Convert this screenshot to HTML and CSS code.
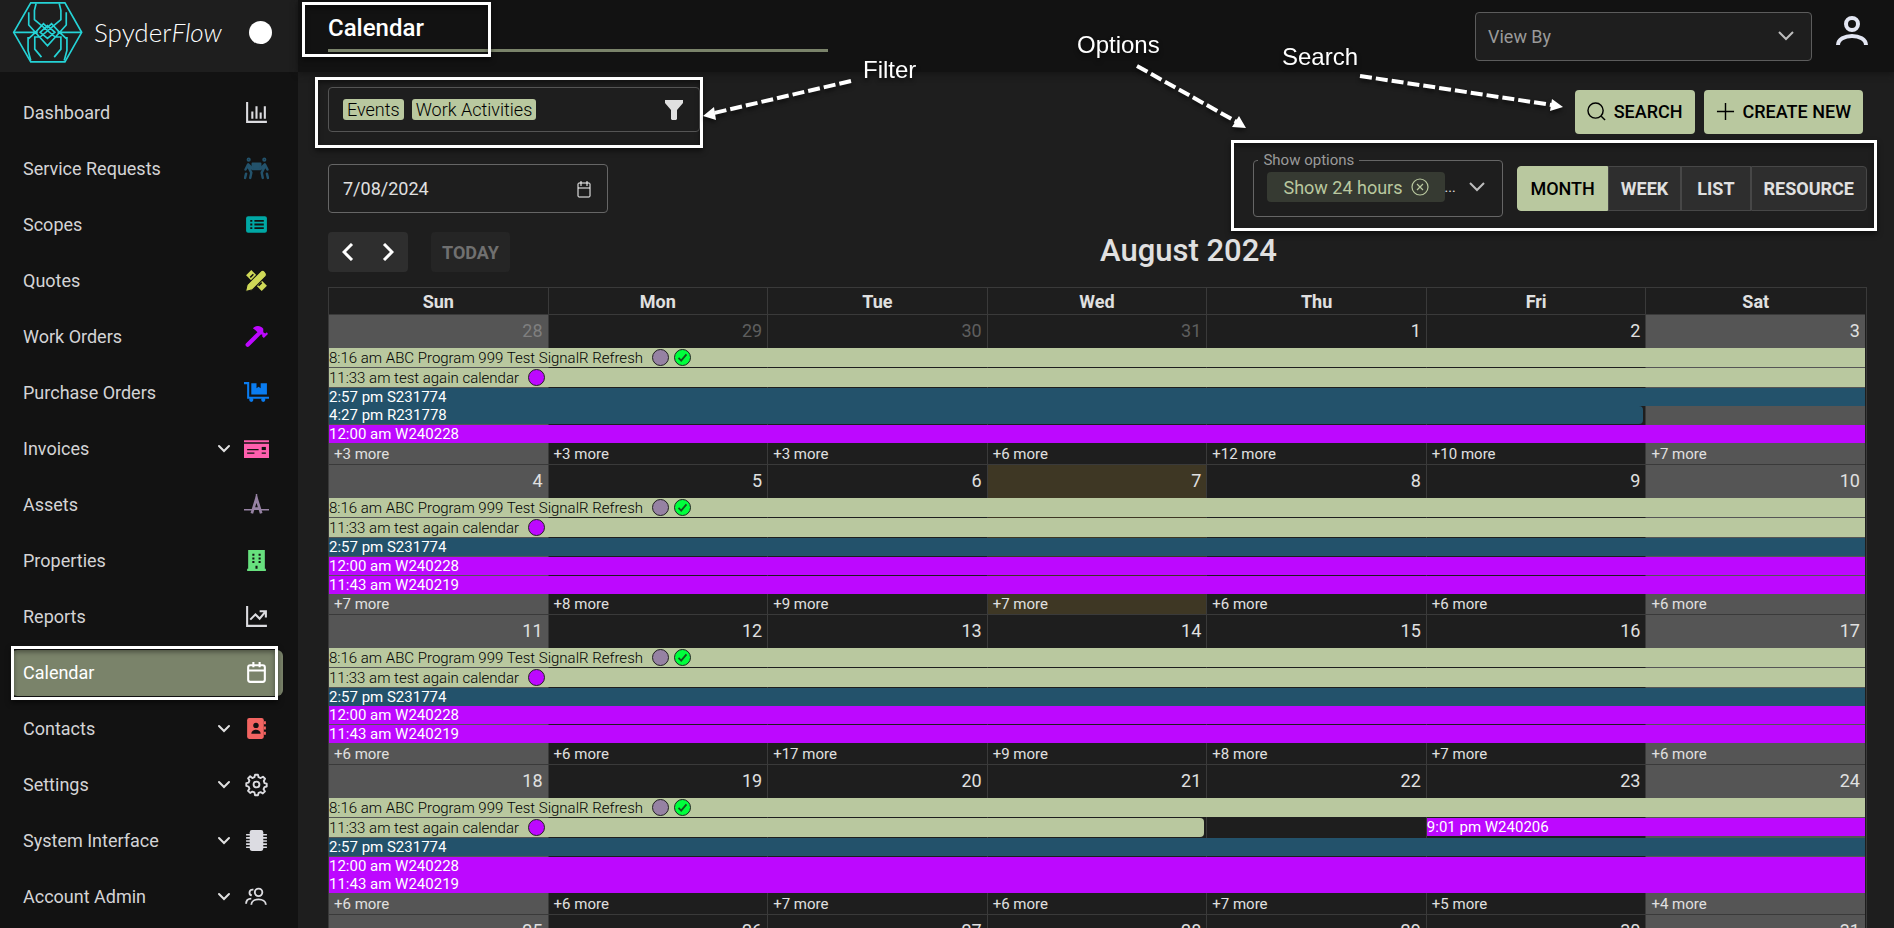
FILE: index.html
```html
<!DOCTYPE html>
<html lang="en">
<head>
  <meta charset="UTF-8">
  <title>SpyderFlow - Calendar</title>
  <link rel="stylesheet" href="styles.css">
</head>
<body>
  <aside class="sidebar">
    <div class="brand">
      <svg class="logo" viewBox="36 0 212 190">
        <path d="M41 96 92 8h102l50 88-50 88H92z"/>
        <path d="M41 96h72M172 96h72M108 10l-5 20v28l62 52h17v36l-20 24M177 10l5 20v28l-62 52h-16v36l20 24M86 36v38l56 62 56-62V36M84 110v40l8 30M200 110v40l-8 30M84 116l22-20 24-26 12 12 12-12 24 26 22 20M120 96l22-20 22 20-22 18z"/>
      </svg>
      <span class="brand-name">Spyder<i>Flow</i></span>
      <span class="brand-dot"></span>
    </div>
    <nav class="menu">
      <a href="#">Dashboard
        <svg class="icon" viewBox="0 0 24 24" fill="none" stroke="#dcdce0" stroke-width="2"><path d="M3 2v19h19M8 18v-7M12 18V6M16 18v-6M20 18V6"/></svg>
      </a>
      <a href="#">Service Requests
        <svg class="icon" viewBox="0 0 24 24" fill="none" stroke="#23526b" stroke-width="2.4" stroke-linecap="round" stroke-linejoin="round"><path d="M8 7h8v6H8z" fill="#23526b" stroke-width="1.5"/><path d="M8 12 4 8 1.500 13M4 10l3 6-1 5M2 17l-1 4M16 12l4-4 2.500 5M20 10l-3 6 1 5M22 17l1 4"/><circle cx="4.500" cy="3.500" r=".8"/><circle cx="19.500" cy="3.500" r=".8"/></svg>
      </a>
      <a href="#">Scopes
        <svg class="icon" viewBox="0 0 24 24"><rect x="2" y="4" width="20" height="16" rx="2" fill="#00a8a5"/><path d="M6 8.500h2M10 8.500h9M6 12h2M10 12h9M6 15.500h2M10 15.500h9" stroke="#121212" stroke-width="1.800"/></svg>
      </a>
      <a href="#">Quotes
        <svg class="icon" viewBox="0 0 24 24"><path d="m2 7 5-5 15 15-5 5z" fill="#cfd957"/><path d="m6 9 3-3M14 17l3-3" stroke="#121212" stroke-width="1.500"/><path d="M1.500 22.500 3 16 16 3c2-3 7 2 5 5L8 21z" fill="#cfd957" stroke="#121212"/></svg>
      </a>
      <a href="#">Work Orders
        <svg class="icon" viewBox="0 0 24 24"><path d="M3.500 20 14 9.500" stroke="#bd08ff" stroke-width="4" stroke-linecap="round"/><path d="M8.500 4C12 1 16 1.500 18.500 4.500V8l2 1 1.500-1 1 1.500-4 4-1.500-1.500V10h-2.500L11 6z" fill="#bd08ff"/></svg>
      </a>
      <a href="#">Purchase Orders
        <svg class="icon" viewBox="0 0 24 24"><path d="M0 3h4v14h20" fill="none" stroke="#0a7cf0" stroke-width="2"/><path d="M7 3h5v5l2-1.500L16 8V3h6v11H7z" fill="#0a7cf0"/><circle cx="7" cy="19" r="2" fill="#0a7cf0"/><circle cx="18.500" cy="19" r="2" fill="#0a7cf0"/></svg>
      </a>
      <a href="#">Invoices
        <svg class="caret" viewBox="0 0 14 14"><path d="m2 5 5 5 5-5"/></svg>
        <svg class="icon" viewBox="0 0 24 24"><path d="M0 4h24v2H0zM0 7.500h24V21H0z" fill="#ff5fae"/><path d="M3 13h11M3 16.500h7M17 16.500h4" stroke="#121212" stroke-width="1.200"/><path d="M17 10.500h4v3h-4z" fill="#121212"/></svg>
      </a>
      <a href="#">Assets
        <svg class="icon" viewBox="0 0 24 24" fill="none" stroke="#9682a3"><path d="M7.500 20.500 12 6l4.500 14.500M9 16h6" stroke-width="2.600"/><path d="M12 2v6M0 17h8M16 17h8" stroke-width="1.400"/></svg>
      </a>
      <a href="#">Properties
        <svg class="icon" viewBox="0 0 24 24"><path d="M4 2h16v18h1v2H3v-2h1z" fill="#67e07e"/><path d="M8 5.500h2v2H8zM14 5.500h2v2h-2zM8 9h2v2H8zM14 9h2v2h-2zM8 12.500h2v2H8zM14 12.500h2v2h-2zM11 17h2v3h-2z" fill="#121212"/></svg>
      </a>
      <a href="#">Reports
        <svg class="icon" viewBox="0 0 24 24" fill="none" stroke="#dcdce0" stroke-width="2"><path d="M3 2v19h19M6 15l5-5 4 4 5-6M15 7h6v6"/></svg>
      </a>
      <a href="#" class="active">Calendar
        <svg class="icon" viewBox="0 0 24 24" fill="none" stroke="#fff" stroke-width="2"><rect x="4" y="5" width="16" height="16" rx="2"/><path d="M4 10h16M9 2v5M15 2v5"/></svg>
        <span class="mark mark-nav"></span>
      </a>
      <a href="#">Contacts
        <svg class="caret" viewBox="0 0 14 14"><path d="m2 5 5 5 5-5"/></svg>
        <svg class="icon" viewBox="0 0 24 24"><rect x="3" y="2" width="16" height="20" rx="2" fill="#f26461"/><path d="M20 5v3M20 10v3M20 15v3" stroke="#f26461" stroke-width="2"/><circle cx="11.500" cy="9" r="2.600" fill="#121212"/><path d="M7 17c0-5 9-5 9 0z" fill="#121212"/></svg>
      </a>
      <a href="#">Settings
        <svg class="caret" viewBox="0 0 14 14"><path d="m2 5 5 5 5-5"/></svg>
        <svg class="icon" viewBox="0 0 24 24" fill="none" stroke="#dcdce0" stroke-width="1.800" stroke-linejoin="round"><circle cx="12" cy="12" r="2.800"/><path d="m10 5 .6-2.400h2.800L14 5l2 .8 2.200-1.300 2 2L19 8.700l.7 2 2.100.5v2.700l-2.200.6-.8 2 1.300 2.100-2 2-2.100-1.300-2 .8-.6 2.200h-2.800L10 19.600l-2-.8-2.100 1.300-2-2L5.200 16l-.8-2-2.200-.6v-2.700l2.200-.5.8-2-1.300-2.100 2-2L8 5.800z"/></svg>
      </a>
      <a href="#">System Interface
        <svg class="caret" viewBox="0 0 14 14"><path d="m2 5 5 5 5-5"/></svg>
        <svg class="icon" viewBox="0 0 24 24"><rect x="5.500" y="2" width="13" height="20" rx="2" fill="#dcdce2"/><path d="M2 6.500h20M2 9.500h20M2 12.500h20M2 15.500h20M2 18.500h20" stroke="#dcdce2" stroke-width="1.500"/></svg>
      </a>
      <a href="#">Account Admin
        <svg class="caret" viewBox="0 0 14 14"><path d="m2 5 5 5 5-5"/></svg>
        <svg class="icon" viewBox="0 0 24 24" fill="none" stroke="#dcdce0" stroke-width="1.800"><circle cx="14" cy="8" r="3.600"/><path d="M7 20c0-7 14-7 14 0M9 5.500c-4-1-5 4.500-1.500 5.500M2 19c0-3 1.500-5 5-5"/></svg>
      </a>
    </nav>
  </aside>

  <main class="page">
    <header class="topbar">
      <div class="page-title">
        <h1>Calendar</h1>
        <span class="mark mark-title"></span>
      </div>
      <div class="select-box">
        <select aria-label="View By"><option>View By</option></select>
        <svg class="chevron" viewBox="0 0 18 18"><path d="m2 5 7 7 7-7"/></svg>
      </div>
      <button class="user" aria-label="Account">
        <svg viewBox="0 0 32 32"><circle cx="16" cy="8" r="6"/><path d="M2 29c0-12 28-12 28 0"/></svg>
      </button>
    </header>

    <div class="content">
      <div class="row">
        <div class="filter">
          <span class="tag">Events</span>
          <span class="tag">Work Activities</span>
          <button aria-label="Filter"><svg viewBox="0 0 18 20"><path d="M0 0h18v3l-6 7v9l-1 1H7l-1-1v-9L0 3z" fill="#e0e0e0"/></svg></button>
          <span class="mark mark-filter"></span>
        </div>
        <div class="actions">
          <button class="btn">
            <svg viewBox="0 0 20 20"><circle cx="9" cy="9" r="8"/><path d="m15 15 4 4"/></svg>SEARCH
          </button>
          <button class="btn">
            <svg viewBox="0 0 20 20"><path d="M10 1v18M1 10h18"/></svg>CREATE NEW
          </button>
        </div>
      </div>

      <div class="row row-date">
        <div class="date-box">
          <input type="text" aria-label="Date" value="7/08/2024">
          <svg viewBox="0 0 18 18"><rect x="3" y="3" width="12" height="14" rx="1"/><path d="M3 8h12M6 1v5M12 1v5"/></svg>
        </div>
        <div class="options">
          <fieldset class="show-options">
            <legend>Show options</legend>
            <span class="chip">Show 24 hours
              <button aria-label="Remove"><svg viewBox="0 0 18 18"><circle cx="9" cy="9" r="8"/><path d="m6 6 6 6M12 6l-6 6"/></svg></button>
            </span>
            <span class="more-chips">...</span>
            <svg class="chevron" viewBox="0 0 18 18"><path d="m2 5 7 7 7-7"/></svg>
          </fieldset>
          <div class="views">
            <button class="selected">MONTH</button>
            <button>WEEK</button>
            <button>LIST</button>
            <button>RESOURCE</button>
          </div>
          <span class="mark mark-options"></span>
        </div>
      </div>

      <div class="cal-head">
        <div class="cal-nav">
          <div class="prev-next">
            <button aria-label="Previous"><svg viewBox="0 0 12 18"><path d="m10 1-8 8 8 8"/></svg></button>
            <button aria-label="Next"><svg viewBox="0 0 12 18"><path d="m2 1 8 8-8 8"/></svg></button>
          </div>
          <button class="today-btn" disabled>TODAY</button>
        </div>
        <h2>August 2024</h2>
        <span></span>
      </div>

      <table class="calendar">
        <thead>
          <tr><th>Sun</th><th>Mon</th><th>Tue</th><th>Wed</th><th>Thu</th><th>Fri</th><th>Sat</th></tr>
        </thead>
        <tbody>
          <tr>
            <td class="weekend other"><span class="num">28</span>
              <div class="event program">8:16 am ABC Program 999 Test SignalR Refresh <i class="dot grey"></i><i class="dot ok"><svg viewBox="0 0 17 17"><path d="m4 9 3 3 6-7"/></svg></i></div>
              <div class="event program">11:33 am test again calendar <i class="dot violet"></i></div>
              <div class="event service joined">2:57 pm S231774</div>
              <div class="event service to-fri">4:27 pm R231778</div>
              <div class="event work">12:00 am W240228</div>
              <a class="more" href="#">+3 more</a></td>
            <td class="other"><span class="num">29</span><a class="more" href="#">+3 more</a></td>
            <td class="other"><span class="num">30</span><a class="more" href="#">+3 more</a></td>
            <td class="other"><span class="num">31</span><a class="more" href="#">+6 more</a></td>
            <td><span class="num">1</span><a class="more" href="#">+12 more</a></td>
            <td><span class="num">2</span><a class="more" href="#">+10 more</a></td>
            <td class="weekend"><span class="num">3</span><a class="more" href="#">+7 more</a></td>
          </tr>
          <tr>
            <td class="weekend"><span class="num">4</span>
              <div class="event program">8:16 am ABC Program 999 Test SignalR Refresh <i class="dot grey"></i><i class="dot ok"><svg viewBox="0 0 17 17"><path d="m4 9 3 3 6-7"/></svg></i></div>
              <div class="event program">11:33 am test again calendar <i class="dot violet"></i></div>
              <div class="event service">2:57 pm S231774</div>
              <div class="event work">12:00 am W240228</div>
              <div class="event work">11:43 am W240219</div>
              <a class="more" href="#">+7 more</a></td>
            <td><span class="num">5</span><a class="more" href="#">+8 more</a></td>
            <td><span class="num">6</span><a class="more" href="#">+9 more</a></td>
            <td class="today"><span class="num">7</span><a class="more" href="#">+7 more</a></td>
            <td><span class="num">8</span><a class="more" href="#">+6 more</a></td>
            <td><span class="num">9</span><a class="more" href="#">+6 more</a></td>
            <td class="weekend"><span class="num">10</span><a class="more" href="#">+6 more</a></td>
          </tr>
          <tr>
            <td class="weekend"><span class="num">11</span>
              <div class="event program">8:16 am ABC Program 999 Test SignalR Refresh <i class="dot grey"></i><i class="dot ok"><svg viewBox="0 0 17 17"><path d="m4 9 3 3 6-7"/></svg></i></div>
              <div class="event program">11:33 am test again calendar <i class="dot violet"></i></div>
              <div class="event service joined">2:57 pm S231774</div>
              <div class="event work">12:00 am W240228</div>
              <div class="event work">11:43 am W240219</div>
              <a class="more" href="#">+6 more</a></td>
            <td><span class="num">12</span><a class="more" href="#">+6 more</a></td>
            <td><span class="num">13</span><a class="more" href="#">+17 more</a></td>
            <td><span class="num">14</span><a class="more" href="#">+9 more</a></td>
            <td><span class="num">15</span><a class="more" href="#">+8 more</a></td>
            <td><span class="num">16</span><a class="more" href="#">+7 more</a></td>
            <td class="weekend"><span class="num">17</span><a class="more" href="#">+6 more</a></td>
          </tr>
          <tr>
            <td class="weekend"><span class="num">18</span>
              <div class="event program">8:16 am ABC Program 999 Test SignalR Refresh <i class="dot grey"></i><i class="dot ok"><svg viewBox="0 0 17 17"><path d="m4 9 3 3 6-7"/></svg></i></div>
              <div class="event program to-wed">11:33 am test again calendar <i class="dot violet"></i></div>
              <div class="event service">2:57 pm S231774</div>
              <div class="event work joined">12:00 am W240228</div>
              <div class="event work">11:43 am W240219</div>
              <a class="more" href="#">+6 more</a></td>
            <td><span class="num">19</span><a class="more" href="#">+6 more</a></td>
            <td><span class="num">20</span><a class="more" href="#">+7 more</a></td>
            <td><span class="num">21</span><a class="more" href="#">+6 more</a></td>
            <td><span class="num">22</span><a class="more" href="#">+7 more</a></td>
            <td><span class="num">23</span>
              <div class="event work two-days second-slot">9:01 pm W240206</div>
              <a class="more" href="#">+5 more</a></td>
            <td class="weekend"><span class="num">24</span><a class="more" href="#">+4 more</a></td>
          </tr>
          <tr>
            <td class="weekend"><span class="num">25</span></td>
            <td><span class="num">26</span></td>
            <td><span class="num">27</span></td>
            <td><span class="num">28</span></td>
            <td><span class="num">29</span></td>
            <td><span class="num">30</span></td>
            <td class="weekend"><span class="num">31</span></td>
          </tr>
        </tbody>
      </table>
    </div>
  </main>

  <!-- help notes drawn over the page -->
  <div class="notes">
    <svg width="1894" height="240" viewBox="0 0 1894 240">
      <g fill="none" stroke="#fff" stroke-width="4" stroke-dasharray="12 4">
        <path d="M851 81 714 113"/>
        <path d="M1137 66 1237 122"/>
        <path d="M1360 76 1552 105"/>
      </g>
      <path d="m703 116 11-9 2 13zM1246 128l-14-1 7-11zM1563 107l-13 4 2-12z" fill="#fff"/>
    </svg>
    <span class="note note-filter">Filter</span>
    <span class="note note-options">Options</span>
    <span class="note note-search">Search</span>
  </div>
</body>
</html>
```
FILE: styles.css
```css
* {
  box-sizing: border-box;
}
body {
  display: flex;
  height: 100vh;
  margin: 0;
  overflow: hidden;
  position: relative;
  background: #1e1e1e;
  color: #e0e0e0;
  font-family: Roboto, Arial, sans-serif;
  font-size: 18px;
}
button, input, select {
  font: inherit;
  color: inherit;
  background: none;
  border: 0;
  padding: 0;
}
a {
  color: inherit;
  text-decoration: none;
}
svg {
  display: block;
}

/* Sidebar */
.sidebar {
  flex: none;
  width: 298px;
  background: #121212;
}
.brand {
  display: flex;
  align-items: center;
  height: 72px;
  padding: 0 26px 8px 12px;
  background: #1e1e1e;
}
.logo {
  width: 71px;
  height: 64px;
  fill: none;
  stroke: #25d3d6;
  stroke-width: 5;
}
.brand-name {
  flex: 1;
  padding-left: 11px;
  color: #fff;
  font-family: Lato, sans-serif;
  font-size: 26px;
  font-weight: 300;
}
.brand-dot {
  width: 23px;
  height: 23px;
  border-radius: 50%;
  background: #fff;
}
.menu {
  display: flex;
  flex-direction: column;
  gap: 10px;
  padding: 18px 15px 0 11px;
}
.menu a {
  display: flex;
  align-items: center;
  position: relative;
  height: 46px;
  padding: 0 14px 2px 12px;
  border-radius: 6px;
  color: #d4d4d6;
}
.menu .active {
  background: #7a836a;
  color: #fff;
}
.icon {
  width: 25px;
  height: 25px;
  margin-left: auto;
}
.caret {
  width: 14px;
  height: 14px;
  margin-left: auto;
  fill: none;
  stroke: #e0e0e0;
  stroke-width: 2;
  stroke-linecap: round;
}
.caret + .icon {
  margin-left: 13px;
}

/* Top bar */
.page {
  flex: 1;
  min-width: 0;
}
.topbar {
  display: flex;
  align-items: center;
  height: 72px;
  padding: 0 26px 0 30px;
  background: #121212;
  box-shadow: 0 2px 6px #151515;
}
.page-title {
  position: relative;
  width: 500px;
  height: 52px;
  margin: 0 auto 20px 0;
  border-bottom: 3px solid #7a836a;
}
.page-title h1 {
  margin: 0;
  padding-top: 14px;
  color: #fff;
  font-size: 24px;
  font-weight: 500;
  line-height: 28px;
}
.select-box {
  display: grid;
  align-items: center;
  width: 337px;
  height: 49px;
  border: 1px solid #5c5c5c;
  border-radius: 4px;
  background: #1e1e1e;
}
.select-box select {
  grid-area: 1 / 1;
  height: 47px;
  padding-left: 12px;
  appearance: none;
  color: #9a9a9a;
}
.chevron {
  width: 18px;
  height: 18px;
  fill: none;
  stroke: #bdbdbd;
  stroke-width: 2;
}
.select-box .chevron {
  grid-area: 1 / 1;
  justify-self: end;
  margin-right: 16px;
  pointer-events: none;
}
.user {
  margin: 0 0 8px 24px;
}
.user svg {
  width: 32px;
  height: 32px;
  fill: none;
  stroke: #e3e6f3;
  stroke-width: 4;
}

/* Filter and options rows */
.content {
  padding: 15px 27px 0 30px;
}
.row {
  display: flex;
  align-items: flex-start;
  justify-content: space-between;
}
.row-date {
  align-items: center;
  margin: 26px 0 15px;
}
.filter {
  display: flex;
  align-items: center;
  gap: 8px;
  position: relative;
  width: 372px;
  height: 45px;
  padding: 0 16px 0 14px;
  border: 1px solid #555;
  border-radius: 4px;
}
.tag {
  padding: 0 4px;
  border-radius: 3px;
  background: #b9c89f;
  color: #000;
  font-weight: 300;
  line-height: 21px;
}
.filter button {
  margin-left: auto;
}
.filter svg {
  width: 18px;
  height: 20px;
}
.actions {
  display: flex;
  gap: 9px;
  padding: 3px 4px 0 0;
}
.btn {
  display: flex;
  align-items: center;
  gap: 8px;
  height: 44px;
  padding: 0 12px 1px;
  border-radius: 4px;
  background: #b9c89f;
  color: #000;
  font-weight: 500;
}
.btn svg {
  width: 19px;
  height: 19px;
  fill: none;
  stroke: #000;
  stroke-width: 1.500;
}
.date-box {
  display: flex;
  align-items: center;
  width: 280px;
  height: 49px;
  padding: 0 14px;
  border: 1px solid #666;
  border-radius: 4px;
}
.date-box input {
  flex: 1;
  min-width: 0;
}
.date-box svg {
  width: 18px;
  height: 18px;
  fill: none;
  stroke: #fff;
}
.options {
  display: flex;
  align-items: center;
  gap: 14px;
  position: relative;
}
.show-options {
  display: flex;
  align-items: center;
  position: relative;
  width: 250px;
  height: 65px;
  margin: -8px 0 0;
  padding: 0 16px 10px 13px;
  border: 1px solid #666;
  border-radius: 4px;
}
.show-options legend {
  margin-left: -9px;
  padding: 0 5px;
  color: #9a9a9a;
  font-size: 15px;
  line-height: 16px;
}
.chip {
  display: flex;
  align-items: center;
  gap: 8px;
  height: 30px;
  padding: 0 16px;
  border-radius: 4px;
  background: #363a32;
  color: #b9c89f;
  white-space: nowrap;
}
.chip svg {
  width: 18px;
  height: 18px;
  fill: none;
  stroke: #b9c89f;
  stroke-width: 1.200;
}
.more-chips {
  font-size: 14px;
}
.show-options .chevron {
  margin-left: auto;
}
.views {
  display: flex;
}
.views button {
  height: 45px;
  padding: 0 12px;
  border: 1px solid #474747;
  background: #2e2e2e;
  font-weight: 700;
}
.views button:nth-child(3) {
  padding: 0 15px;
}
.views .selected {
  border-color: #b9c89f;
  border-radius: 4px 0 0 4px;
  background: #b9c89f;
  color: #000;
  font-weight: 500;
}
.views button:last-child {
  border-radius: 0 4px 4px 0;
}

/* Calendar header */
.cal-head {
  display: flex;
  align-items: center;
  justify-content: space-between;
  height: 40px;
  margin-bottom: 15px;
}
.cal-head h2 {
  margin: 0;
  font-size: 31px;
  font-weight: 500;
  line-height: 36px;
  padding-bottom: 2px;
}
.cal-nav {
  display: flex;
  gap: 23px;
}
.prev-next {
  display: flex;
  border-radius: 4px;
  background: #2e2e2e;
}
.prev-next button {
  width: 40px;
  height: 40px;
  padding: 0 14px;
}
.prev-next svg {
  width: 12px;
  height: 18px;
  fill: none;
  stroke: #fff;
  stroke-width: 3;
}
.today-btn {
  height: 40px;
  padding: 0 11px;
  border-radius: 4px;
  background: #252525;
  color: #707070;
  font-weight: 700;
}

/* Month grid */
.calendar, .calendar thead, .calendar tbody {
  display: block;
}
.calendar {
  padding-right: 1px;
  border: solid #3a3a3a;
  border-width: 1px 1px 0 0;
}
.calendar tr {
  display: grid;
  grid-template-columns: repeat(7, 1fr);
}
.calendar th {
  height: 26px;
  padding: 0;
  border-left: 1px solid #3a3a3a;
  line-height: 27px;
}
.calendar td {
  display: flex;
  flex-direction: column;
  min-width: 0;
  min-height: 150px;
  padding: 0;
  border-top: 1px solid #3a3a3a;
  border-left: 1px solid #3a3a3a;
}
.weekend {
  background: #555;
}
.today {
  background: #3e3724;
}
.num {
  height: 33px;
  padding: 2px 5px 0 0;
  line-height: 27px;
  text-align: right;
}
.other .num {
  color: #5e5e5e;
}
.weekend.other .num {
  color: #7f7f7f;
}
.more {
  margin-top: auto;
  padding-left: 5px;
  font-size: 15px;
  line-height: 19px;
}
.event {
  position: relative;
  z-index: 1;
  flex: none;
  width: calc(700% + 6px);
  height: 18px;
  margin-bottom: 1px;
  color: #fff;
  font-size: 15px;
  line-height: 18px;
  white-space: nowrap;
}
.program {
  display: flex;
  align-items: center;
  height: 19px;
  background: #b9c89f;
  color: #000;
  font-weight: 300;
}
.service {
  background: #23526b;
}
.work {
  background: #bd08ff;
}
.joined {
  margin-bottom: 0;
}
.to-fri {
  width: calc(600% + 3px);
  border-radius: 0 4px 4px 0;
}
.to-wed {
  width: calc(400% + 1px);
  border-radius: 0 4px 4px 0;
}
.two-days {
  width: calc(200% + 1px);
}
.second-slot {
  margin-top: 20px;
}
.dot {
  width: 17px;
  height: 17px;
  margin-left: 5px;
  border: 1px solid #222;
  border-radius: 50%;
}
.dot:first-of-type {
  margin-left: 9px;
}
.grey {
  background: #9682a3;
}
.violet {
  background: #bd08ff;
}
.ok {
  background: #00ff3c;
}
.ok svg {
  fill: none;
  stroke: #14521f;
  stroke-width: 2;
}

/* Help notes */
.mark {
  position: absolute;
  border: 3px solid #fff;
  box-shadow: 0 3px 5px rgba(0, 0, 0, 0.5), inset 0 3px 5px rgba(0, 0, 0, 0.4);
  pointer-events: none;
}
.mark-nav {
  inset: -4px 5px -4px 0;
}
.mark-title {
  top: 2px;
  left: -26px;
  width: 189px;
  height: 55px;
}
.mark-filter {
  inset: -11px -4px -17px -14px;
}
.mark-options {
  inset: -20px -10px -14px -22px;
}
.notes {
  position: absolute;
  inset: 0;
  overflow: hidden;
  pointer-events: none;
  filter: drop-shadow(0 3px 2px rgba(0, 0, 0, 0.5));
}
.note {
  position: absolute;
  color: #fff;
  font-family: "Liberation Sans", Arial, sans-serif;
  font-size: 24px;
  line-height: 28px;
}
.note-filter {
  top: 56px;
  left: 863px;
}
.note-options {
  top: 31px;
  left: 1077px;
}
.note-search {
  top: 43px;
  left: 1282px;
}
```
